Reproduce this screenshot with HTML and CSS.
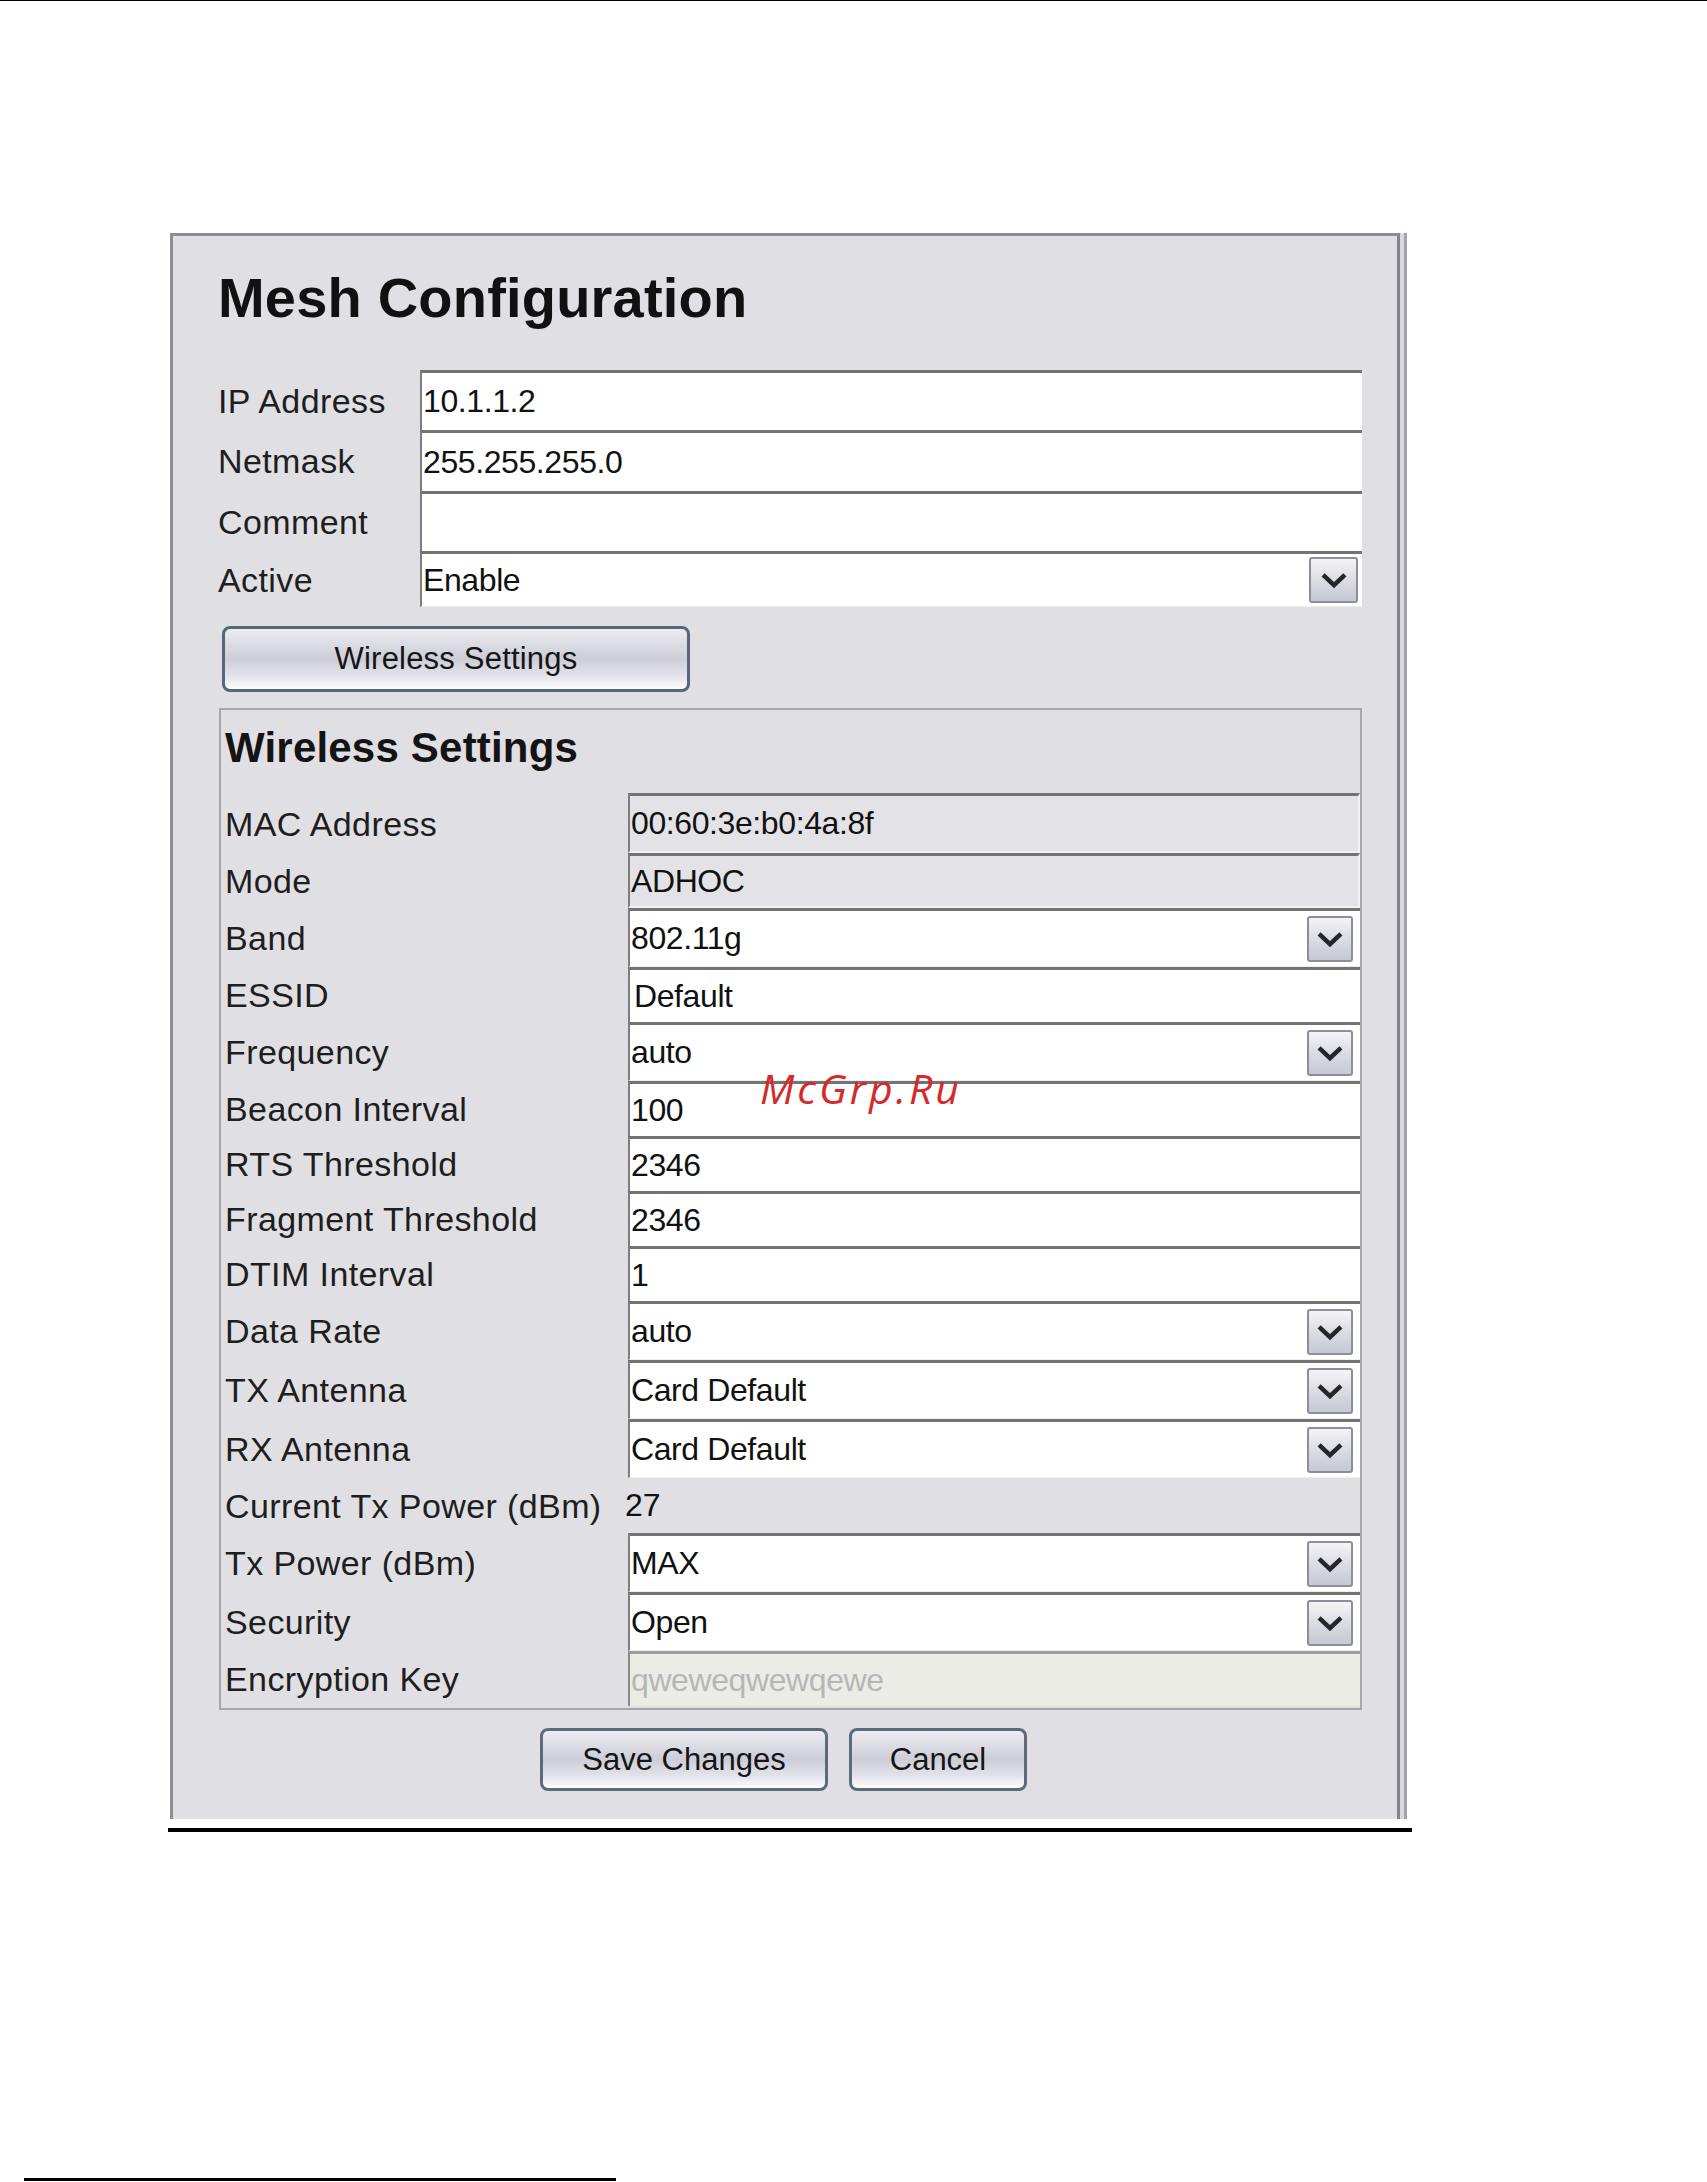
FILE: index.html
```html
<!DOCTYPE html>
<html lang="en">
<head>
<meta charset="utf-8">
<title>Mesh Configuration</title>
<link rel="stylesheet" href="styles.css">
</head>
<body>
<div class="topline"></div>
<div class="frame">
  <div class="panel">
    <h1 class="title">Mesh Configuration</h1>
    <div class="topform">
      <div class="frow h60"><div class="lbl">IP Address</div><div class="field">10.1.1.2</div></div>
      <div class="frow h61"><div class="lbl">Netmask</div><div class="field">255.255.255.0</div></div>
      <div class="frow h60"><div class="lbl">Comment</div><div class="field"></div></div>
      <div class="frow h56"><div class="lbl">Active</div><div class="field sel">Enable<span class="arrow top"><svg viewBox="0 0 22 22" width="32" height="32"><path d="M3.5 7.5 L11 14.5 L18.5 7.5" fill="none" stroke="#26262a" stroke-width="3.1"/></svg></span></div></div>
    </div>
    <div class="wbtn">Wireless Settings</div>
    <div class="wl">
      <h2 class="wl-head">Wireless Settings</h2>
      <div class="wrows">
        <div class="frow h60"><div class="lbl wide">MAC Address</div><div class="field ro">00:60:3e:b0:4a:8f</div></div>
        <div class="frow h55"><div class="lbl wide">Mode</div><div class="field ro">ADHOC</div></div>
        <div class="frow h59"><div class="lbl wide">Band</div><div class="field sel">802.11g<span class="arrow"><svg viewBox="0 0 22 22" width="32" height="32"><path d="M3.5 7.5 L11 14.5 L18.5 7.5" fill="none" stroke="#26262a" stroke-width="3.1"/></svg></span></div></div>
        <div class="frow h55"><div class="lbl wide">ESSID</div><div class="field pad">Default</div></div>
        <div class="frow h59"><div class="lbl wide">Frequency</div><div class="field sel">auto<span class="arrow"><svg viewBox="0 0 22 22" width="32" height="32"><path d="M3.5 7.5 L11 14.5 L18.5 7.5" fill="none" stroke="#26262a" stroke-width="3.1"/></svg></span></div></div>
        <div class="frow h55"><div class="lbl wide">Beacon Interval</div><div class="field">100</div></div>
        <div class="frow h55"><div class="lbl wide">RTS Threshold</div><div class="field">2346</div></div>
        <div class="frow h55"><div class="lbl wide">Fragment Threshold</div><div class="field">2346</div></div>
        <div class="frow h55"><div class="lbl wide">DTIM Interval</div><div class="field">1</div></div>
        <div class="frow h59"><div class="lbl wide">Data Rate</div><div class="field sel">auto<span class="arrow"><svg viewBox="0 0 22 22" width="32" height="32"><path d="M3.5 7.5 L11 14.5 L18.5 7.5" fill="none" stroke="#26262a" stroke-width="3.1"/></svg></span></div></div>
        <div class="frow h59"><div class="lbl wide">TX Antenna</div><div class="field sel">Card Default<span class="arrow"><svg viewBox="0 0 22 22" width="32" height="32"><path d="M3.5 7.5 L11 14.5 L18.5 7.5" fill="none" stroke="#26262a" stroke-width="3.1"/></svg></span></div></div>
        <div class="frow h59"><div class="lbl wide">RX Antenna</div><div class="field sel">Card Default<span class="arrow"><svg viewBox="0 0 22 22" width="32" height="32"><path d="M3.5 7.5 L11 14.5 L18.5 7.5" fill="none" stroke="#26262a" stroke-width="3.1"/></svg></span></div></div>
        <div class="frow h55"><div class="lbl wide">Current Tx Power (dBm)</div><div class="plain">27</div></div>
        <div class="frow h59"><div class="lbl wide">Tx Power (dBm)</div><div class="field sel">MAX<span class="arrow"><svg viewBox="0 0 22 22" width="32" height="32"><path d="M3.5 7.5 L11 14.5 L18.5 7.5" fill="none" stroke="#26262a" stroke-width="3.1"/></svg></span></div></div>
        <div class="frow h59"><div class="lbl wide">Security</div><div class="field sel">Open<span class="arrow"><svg viewBox="0 0 22 22" width="32" height="32"><path d="M3.5 7.5 L11 14.5 L18.5 7.5" fill="none" stroke="#26262a" stroke-width="3.1"/></svg></span></div></div>
        <div class="frow h55"><div class="lbl wide">Encryption Key</div><div class="field dis">qweweqwewqewe</div></div>
      </div>
    </div>
    <div class="actions">
      <div class="abtn save">Save Changes</div>
      <div class="abtn cancel">Cancel</div>
    </div>
  </div>
</div>
<div class="rule"></div>
<div class="foot"></div>
<div class="watermark">McGrp.Ru</div>
</body>
</html>
```

FILE: styles.css
```css
html, body {
  margin: 0;
  padding: 0;
  background: #ffffff;
}
body {
  position: relative;
  width: 1707px;
  height: 2182px;
  overflow: hidden;
  font-family: "Liberation Sans", Arial, sans-serif;
  color: #1c1c1c;
}
.topline {
  height: 1px;
  background: #000;
}
.frame {
  margin: 232px 0 0 170px;
  width: fit-content;
  display: flex;
  border-right: 3px solid #9ea2b4;
  padding-right: 4px;
  background: #d9d9df;
}
.panel {
  width: 1144px;
  background: #e0e0e4;
  border-left: 3px solid #8e8e92;
  border-top: 3px solid #8e8e92;
  border-right: 3px solid #84848c;
  padding: 0 35px 28px 45px;
}
.title {
  margin: 30px 0 0;
  font-size: 56px;
  line-height: 64px;
  font-weight: bold;
  color: #111;
  letter-spacing: 0.2px;
}
.topform {
  margin-top: 40px;
  display: flex;
  flex-direction: column;
}
.frow {
  display: flex;
  align-items: stretch;
}
.h55 { height: 55px; }
.h56 { height: 56px; }
.h59 { height: 59px; }
.h60 { height: 60px; }
.h61 { height: 61px; }
.lbl {
  width: 202px;
  flex: none;
  display: flex;
  align-items: center;
  font-size: 34px;
  letter-spacing: 0.4px;
  color: #1e1e1e;
  padding-top: 2px;
  box-sizing: border-box;
  white-space: nowrap;
}
.lbl.wide {
  width: 403px;
}
.field {
  flex: 1;
  box-sizing: border-box;
  display: flex;
  align-items: center;
  background: #fff;
  border-top: 3px solid #737373;
  border-left: 2px solid #7e7e7e;
  padding-left: 1px;
  font-size: 32px;
  letter-spacing: -0.4px;
  color: #111;
  white-space: nowrap;
}
.field.pad {
  padding-left: 4px;
}
.field.ro {
  background: #e3e3e7;
  border-right: 2px solid #f1f1f4;
  border-bottom: 2px solid #f1f1f4;
}
.field.dis {
  background: #ecece6;
  color: #b6b6b6;
  border-top: 3px solid #9c9c9c;
  border-left: 2px solid #888;
}
.field.sel {
  border-bottom: 1px solid #eeeef2;
}
.arrow {
  margin-left: auto;
  margin-right: 7px;
  width: 46px;
  height: 46px;
  box-sizing: border-box;
  border: 2px solid #8e8e9a;
  border-radius: 3px;
  background: linear-gradient(#f4f4f7, #d9dae2 55%, #c6c8d3);
  display: flex;
  align-items: center;
  justify-content: center;
}
.arrow.top {
  margin-right: 4px;
  width: 49px;
}
.plain {
  display: flex;
  align-items: center;
  font-size: 32px;
  color: #111;
  margin-left: -3px;
}
.wbtn {
  box-sizing: border-box;
  width: 468px;
  height: 66px;
  margin: 19px 0 0 4px;
  border: 3px solid #56677a;
  border-radius: 8px;
  background: linear-gradient(#ebebf1, #cdcdd8 50%, #e4e4ec 80%, #fdfdfe);
  display: flex;
  align-items: center;
  justify-content: center;
  font-size: 31px;
  color: #151515;
  letter-spacing: 0.2px;
}
.wl {
  margin: 16px 0 0 1px;
  width: 1143px;
  box-sizing: border-box;
  border: 2px solid #a6a6ac;
  padding: 0 0 2px 4px;
}
.wl-head {
  margin: 14px 0 21px;
  font-size: 42px;
  line-height: 48px;
  font-weight: bold;
  color: #141414;
  letter-spacing: 0.2px;
}
.wrows {
  display: flex;
  flex-direction: column;
}
.actions {
  margin-top: 18px;
  display: flex;
  justify-content: center;
  gap: 21px;
  padding-right: 13px;
}
.abtn {
  box-sizing: border-box;
  height: 63px;
  border: 3px solid #5c6b7c;
  border-radius: 8px;
  background: linear-gradient(#ebebf1, #cdcdd8 50%, #e4e4ec 80%, #fdfdfe);
  display: flex;
  align-items: center;
  justify-content: center;
  font-size: 31px;
  color: #151515;
}
.abtn.save { width: 288px; }
.abtn.cancel { width: 178px; }
.rule {
  margin: 9px 0 0 168px;
  width: 1244px;
  height: 4px;
  background: #000;
}
.foot {
  margin: 346px 0 0 24px;
  width: 592px;
  height: 3px;
  background: #000;
}
.watermark {
  position: absolute;
  left: 760px;
  top: 1068px;
  font-family: "Open Sans", "DejaVu Sans", sans-serif;
  font-style: italic;
  font-size: 41px;
  line-height: 41px;
  letter-spacing: 3px;
  color: #d42a2a;
}
```
